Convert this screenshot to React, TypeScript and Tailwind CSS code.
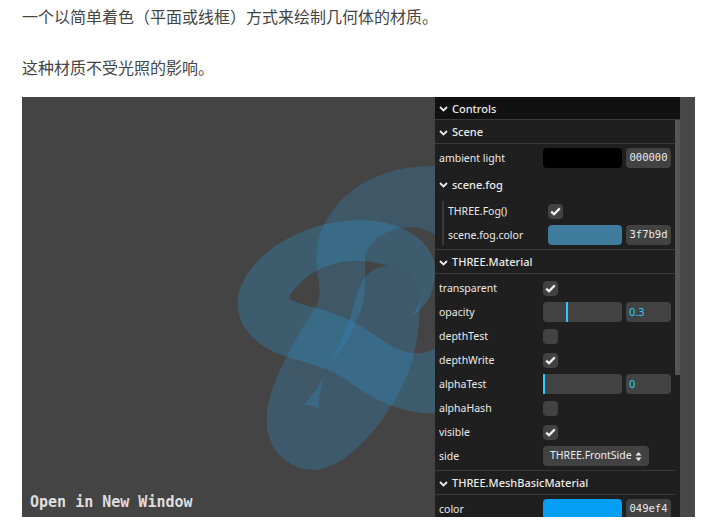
import React from 'react';

const sans = "font-['Noto_Sans','Open_Sans',sans-serif]";

const Chevron: React.FC = () => (
    <svg width="9" height="6" viewBox="0 0 9 6" className="shrink-0">
        <path d="M1 1 L4.5 4.5 L8 1" fill="none" stroke="#ebebeb" strokeWidth="1.8" />
    </svg>
);

const Title: React.FC<{ text: string; line?: boolean; className?: string }> = ({ text, line = true, className = 'h-6' }) => (
    <div className={`flex items-center gap-1 pl-1 pt-0.5 font-medium text-[#ebebeb] ${className} ${line ? 'border-b border-[#3a3a3a]' : ''}`}>
        <Chevron />
        <span>{text}</span>
    </div>
);

const Check: React.FC<{ on?: boolean }> = ({ on }) => (
    <div className="flex h-[15px] w-[15px] items-center justify-center rounded-sm bg-[#424242]">
        {on && (
            <svg width="11" height="9" viewBox="0 0 11 9">
                <path d="M1.2 4.6 L4 7.2 L9.8 1.4" fill="none" stroke="#f5f5f5" strokeWidth="2.2" />
            </svg>
        )}
    </div>
);

const Row: React.FC<{ label: string; labelWidth?: string; children: React.ReactNode }> = ({ label, labelWidth = 'w-[104px]', children }) => (
    <div className="flex h-5 items-center">
        <span className={`shrink-0 pt-0.5 text-[10.5px] text-[#ebebeb] ${labelWidth}`}>{label}</span>
        {children}
    </div>
);

const Hex: React.FC<{ value: string }> = ({ value }) => (
    <div className="ml-1 flex h-5 w-[45px] items-center justify-center rounded-sm bg-[#424242] font-['DejaVu_Sans_Mono',monospace] text-[10.5px] font-medium text-[#ebebeb]">
        {value}
    </div>
);

const Slider: React.FC<{ pos: string; value: string }> = ({ pos, value }) => (
    <>
        <div className="relative h-5 w-[79px] rounded-sm bg-[#424242]">
            <div className={`absolute top-0 h-5 w-0.5 bg-[#2cc9ff] ${pos}`} />
        </div>
        <div className="ml-1 flex h-5 w-[45px] items-center rounded-sm bg-[#424242] pl-[3px] text-[#2cc9ff]">{value}</div>
    </>
);

const Knot: React.FC = () => (
    <svg viewBox="22 97 413 420" className="h-[420px] w-[413px] shrink-0 bg-[#444444]">
        <g transform="translate(200 170) scale(0.3333)" fill="#2f95d0">
            <path fillOpacity="0.3" d="M480 150 C300 150 115 270 113 400 C115 500 210 545 260 560 C340 585 390 595 440 630 C520 690 600 730 705 730 L705 535 C670 555 620 560 560 520 C500 475 430 435 350 415 C310 405 280 395 265 385 C300 320 380 272 470 272 C520 272 540 285 575 285 C620 290 660 330 660 385 C655 410 645 430 630 440 C670 420 705 380 705 300 C705 210 600 150 480 150 Z" />
            <path fillOpacity="0.25" d="M705 -12 C640 -12 600 -5 560 8 C430 50 340 160 350 280 C352 330 365 370 355 390 C350 410 345 415 340 420 C310 470 280 520 260 560 C275 620 290 670 305 710 C325 700 345 705 355 720 C355 680 365 640 380 600 C410 550 450 510 470 450 C490 410 495 380 495 340 L495 270 C495 220 560 172 630 172 C660 172 685 180 705 195 Z" />
            <path fillOpacity="0.27" d="M305 710 C360 660 400 570 440 470 C465 410 470 350 495 320 C515 300 545 285 575 285 C620 290 660 330 660 380 C660 440 655 500 640 560 C610 680 480 880 350 900 C290 905 205 860 200 760 C200 680 230 620 260 560 C275 620 290 670 305 710 Z" />
        </g>
    </svg>
);

const App: React.FC = () => {
    return (
        <div className="h-[526px] w-[714px] overflow-hidden bg-white px-[22px] pt-[3px]">
            <p className="h-[26px] font-['Noto_Sans_CJK_SC',sans-serif] text-base leading-[26px] text-[#444444]">一个以简单着色（平面或线框）方式来绘制几何体的材质。</p>
            <p className="mt-[25px] h-[26px] font-['Noto_Sans_CJK_SC',sans-serif] text-base leading-[26px] text-[#444444]">这种材质不受光照的影响。</p>
            <div className="relative mt-[17px] flex h-[420px] w-[673px] overflow-hidden bg-[#484848]">
                <Knot />
                <span className="absolute bottom-[7px] left-2 font-['DejaVu_Sans_Mono',monospace] text-[15px] font-bold leading-4 text-[#dedede]">Open in New Window</span>
                <div className={`h-[420px] w-[245px] shrink-0 bg-[#1f1f1f] text-[11px] ${sans}`}>
                    <Title text="Controls" className="h-[23px] bg-[#111111]" />
                    <div className="flex">
                        <div className="w-60 shrink-0">
                            <Title text="Scene" />
                            <div className="px-1 pt-1">
                                <Row label="ambient light">
                                    <div className="h-5 w-[79px] rounded-sm bg-black" />
                                    <Hex value="000000" />
                                </Row>
                            </div>
                            <Title text="scene.fog" line={false} className="mt-1 h-6" />
                            <div className="ml-[7px] flex flex-col gap-1 border-l-2 border-[#3a3a3a] pl-1 mt-[5px] mr-1">
                                <Row label="THREE.Fog()" labelWidth="w-[100px]">
                                    <Check on />
                                </Row>
                                <Row label="scene.fog.color" labelWidth="w-[100px]">
                                    <div className="h-5 w-[74px] rounded-sm bg-[#3f7b9d]" />
                                    <Hex value="3f7b9d" />
                                </Row>
                            </div>
                            <div className="mt-1 border-t border-[#3a3a3a]">
                                <Title text="THREE.Material" />
                            </div>
                            <div className="flex flex-col gap-1 px-1 pt-1">
                                <Row label="transparent"><Check on /></Row>
                                <Row label="opacity"><Slider pos="left-[23px]" value="0.3" /></Row>
                                <Row label="depthTest"><Check /></Row>
                                <Row label="depthWrite"><Check on /></Row>
                                <Row label="alphaTest"><Slider pos="left-0" value="0" /></Row>
                                <Row label="alphaHash"><Check /></Row>
                                <Row label="visible"><Check on /></Row>
                                <Row label="side">
                                    <div className="flex h-5 w-[106px] items-center justify-between rounded-sm bg-[#424242] pl-[7px] pr-[7px] text-[10.5px] text-[#ebebeb]">
                                        <span>THREE.FrontSide</span>
                                        <svg width="7" height="11" viewBox="0 0 7 11">
                                            <path d="M0.5 4.5 L3.5 1 L6.5 4.5 Z M0.5 6.5 L3.5 10 L6.5 6.5 Z" fill="#ebebeb" />
                                        </svg>
                                    </div>
                                </Row>
                            </div>
                            <div className="mt-1 border-t border-[#3a3a3a]">
                                <Title text="THREE.MeshBasicMaterial" />
                            </div>
                            <div className="px-1 pt-1">
                                <Row label="color">
                                    <div className="h-5 w-[79px] rounded-sm bg-[#049ef4]" />
                                    <Hex value="049ef4" />
                                </Row>
                            </div>
                        </div>
                        <div className="h-[255px] w-[5px] bg-[#555555]" />
                    </div>
                </div>
            </div>
        </div>
    );
};

export default App;
